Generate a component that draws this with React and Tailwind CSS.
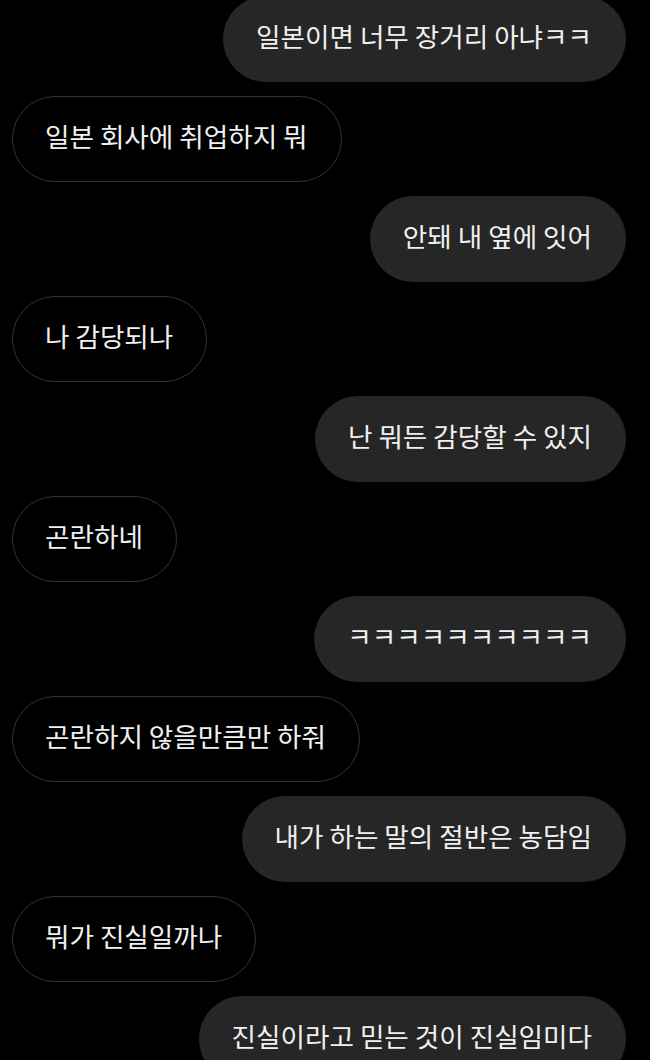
import React from "react";

const msgs = [
  ["r", "일본이면 너무 장거리 아냐ㅋㅋ"],
  ["l", "일본 회사에 취업하지 뭐"],
  ["r", "안돼 내 옆에 잇어"],
  ["l", "나 감당되나"],
  ["r", "난 뭐든 감당할 수 있지"],
  ["l", "곤란하네"],
  ["r", "ㅋㅋㅋㅋㅋㅋㅋㅋㅋㅋ"],
  ["l", "곤란하지 않을만큼만 하줘"],
  ["r", "내가 하는 말의 절반은 농담임"],
  ["l", "뭐가 진실일까나"],
  ["r", "진실이라고 믿는 것이 진실임미다"],
];

export default function App() {
  return (
    <div
      className="w-[650px] h-[1060px] bg-black overflow-hidden"
      style={{ fontFamily: '"Noto Sans CJK KR", "Noto Sans", sans-serif' }}
    >
      <div className="flex flex-col gap-[14px] mt-[-4px] pl-[12px] pr-[24px]">
        {msgs.map(([side, text], i) =>
          side === "r" ? (
            <div key={i} className="flex justify-end">
              <div className="h-[86px] flex items-center rounded-full bg-[#262626] pl-[33px] pr-[34px] pb-[6px] text-[26.6px] leading-none text-[#f0f0f0] whitespace-nowrap">
                {text}
              </div>
            </div>
          ) : (
            <div key={i} className="flex justify-start">
              <div className="h-[86px] flex items-center rounded-full border border-[#353535] pl-[32px] pr-[33px] pb-[6px] text-[26.6px] leading-none text-[#f0f0f0] whitespace-nowrap">
                {text}
              </div>
            </div>
          )
        )}
      </div>
    </div>
  );
}
